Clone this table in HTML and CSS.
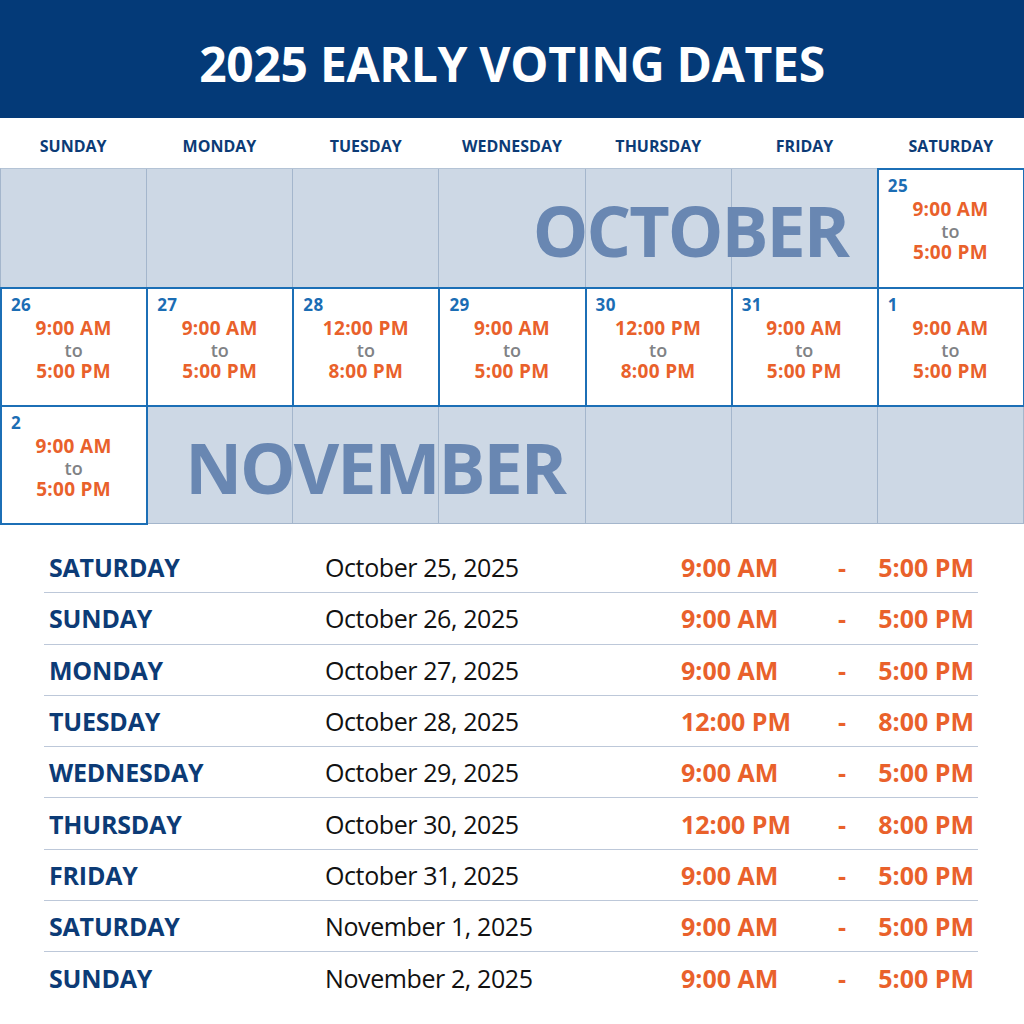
FILE: index.html
```html
<!DOCTYPE html>
<html lang="en">
<head>
<meta charset="utf-8">
<title>2025 Early Voting Dates</title>
<link rel="stylesheet" href="styles.css">
</head>
<body>
<div class="page">
  <header class="banner"><h1>2025 EARLY VOTING DATES</h1></header>

  <div class="weekdays">
    <div>SUNDAY</div><div>MONDAY</div><div>TUESDAY</div><div>WEDNESDAY</div><div>THURSDAY</div><div>FRIDAY</div><div>SATURDAY</div>
  </div>

  <div class="cal">
    <div class="cell"></div><div class="cell"></div><div class="cell"></div><div class="cell"></div><div class="cell"></div><div class="cell"></div>
    <div class="cell day"><span class="num">25</span><div class="hours"><b>9:00 AM</b><i>to</i><b>5:00 PM</b></div></div>

    <div class="cell day"><span class="num">26</span><div class="hours"><b>9:00 AM</b><i>to</i><b>5:00 PM</b></div></div>
    <div class="cell day"><span class="num">27</span><div class="hours"><b>9:00 AM</b><i>to</i><b>5:00 PM</b></div></div>
    <div class="cell day"><span class="num">28</span><div class="hours"><b>12:00 PM</b><i>to</i><b>8:00 PM</b></div></div>
    <div class="cell day"><span class="num">29</span><div class="hours"><b>9:00 AM</b><i>to</i><b>5:00 PM</b></div></div>
    <div class="cell day"><span class="num">30</span><div class="hours"><b>12:00 PM</b><i>to</i><b>8:00 PM</b></div></div>
    <div class="cell day"><span class="num">31</span><div class="hours"><b>9:00 AM</b><i>to</i><b>5:00 PM</b></div></div>
    <div class="cell day"><span class="num">1</span><div class="hours"><b>9:00 AM</b><i>to</i><b>5:00 PM</b></div></div>

    <div class="cell day"><span class="num">2</span><div class="hours"><b>9:00 AM</b><i>to</i><b>5:00 PM</b></div></div>
    <div class="cell"></div><div class="cell"></div><div class="cell"></div><div class="cell"></div><div class="cell"></div><div class="cell"></div>

    <div class="month oct"><span>OCTOBER</span></div>
    <div class="month nov"><span>NOVEMBER</span></div>
  </div>

  <div class="list">
    <div class="row"><span class="wd">SATURDAY</span><span class="dt">October 25, 2025</span><span class="t">9:00 AM</span><span class="dash">-</span><span class="t end">5:00 PM</span></div>
    <div class="row"><span class="wd">SUNDAY</span><span class="dt">October 26, 2025</span><span class="t">9:00 AM</span><span class="dash">-</span><span class="t end">5:00 PM</span></div>
    <div class="row"><span class="wd">MONDAY</span><span class="dt">October 27, 2025</span><span class="t">9:00 AM</span><span class="dash">-</span><span class="t end">5:00 PM</span></div>
    <div class="row"><span class="wd">TUESDAY</span><span class="dt">October 28, 2025</span><span class="t">12:00 PM</span><span class="dash">-</span><span class="t end">8:00 PM</span></div>
    <div class="row"><span class="wd">WEDNESDAY</span><span class="dt">October 29, 2025</span><span class="t">9:00 AM</span><span class="dash">-</span><span class="t end">5:00 PM</span></div>
    <div class="row"><span class="wd">THURSDAY</span><span class="dt">October 30, 2025</span><span class="t">12:00 PM</span><span class="dash">-</span><span class="t end">8:00 PM</span></div>
    <div class="row"><span class="wd">FRIDAY</span><span class="dt">October 31, 2025</span><span class="t">9:00 AM</span><span class="dash">-</span><span class="t end">5:00 PM</span></div>
    <div class="row"><span class="wd">SATURDAY</span><span class="dt">November 1, 2025</span><span class="t">9:00 AM</span><span class="dash">-</span><span class="t end">5:00 PM</span></div>
    <div class="row"><span class="wd">SUNDAY</span><span class="dt">November 2, 2025</span><span class="t">9:00 AM</span><span class="dash">-</span><span class="t end">5:00 PM</span></div>
  </div>
</div>
</body>
</html>
```

FILE: styles.css
```css
* { box-sizing: border-box; margin: 0; padding: 0; }
html, body { background: #ffffff; }
body { font-family: "Open Sans", "Noto Sans", sans-serif; width: 1024px; height: 1024px; overflow: hidden; }

.banner {
  height: 118px;
  background: #043a78;
  display: flex;
  align-items: center;
  justify-content: center;
}
.banner h1 {
  color: #ffffff;
  font-size: 48px;
  font-weight: 700;
  letter-spacing: -0.3px;
  line-height: 1;
  padding-top: 10px;
}

.weekdays {
  height: 50px;
  display: grid;
  grid-template-columns: repeat(7, 1fr);
  align-items: center;
  text-align: center;
  color: #0c3b76;
  font-size: 16px;
  font-weight: 700;
  padding-top: 6px;
}

.cal {
  position: relative;
  display: grid;
  grid-template-columns: repeat(7, 1fr);
  grid-template-rows: 119px 118px 118px;
  border-top: 1px solid #b4c3d5;
  border-left: 1px solid #a4b6cc;
  background: #cdd8e5;
}
.cell {
  border-right: 1px solid #a4b6cc;
  border-bottom: 1px solid #a4b6cc;
}
.cell.day {
  position: relative;
  background: #ffffff;
  border-color: transparent;
  outline: 2px solid #1c6fb6;
  outline-offset: -1px;
  padding: 7px 0 0 10px;
  z-index: 1;
}
.num {
  display: block;
  color: #1b6db4;
  font-size: 17px;
  font-weight: 700;
  letter-spacing: 0.4px;
  line-height: 20px;
}
.hours {
  display: flex;
  flex-direction: column;
  align-items: center;
  margin-left: -10px;
  margin-top: 3px;
  line-height: 21.5px;
}
.hours b { color: #e9612b; font-size: 19px; font-weight: 700; letter-spacing: 0.3px; }
.hours i { color: #808285; font-size: 18px; font-style: normal; font-weight: 600; }

.month {
  position: absolute;
  top: 0;
  bottom: 0;
  display: flex;
  align-items: center;
  color: #6987b2;
  font-size: 70px;
  font-weight: 700;
  letter-spacing: -2px;
  line-height: 1;
}
.month.oct { grid-row: 1 / 2; grid-column: 1 / 7; right: 30px; padding-top: 2px; }
.month.nov { grid-row: 3 / 4; grid-column: 2 / 8; left: 38px; padding-top: 4px; }

.list {
  margin: 18px 46px 0 44px;
}
.row {
  height: 51.3px;
  display: grid;
  grid-template-columns: 276px 356px 157px 20px 1fr;
  align-items: center;
  padding: 0 4px 0 5px;
  border-bottom: 1.5px solid #bdc8d9;
  font-size: 25px;
}
.row:last-child { border-bottom: none; }
.wd { color: #0c3b76; font-weight: 700; letter-spacing: -0.2px; }
.dt { color: #111111; font-weight: 400; letter-spacing: -0.4px; }
.t { color: #e9612b; font-weight: 700; letter-spacing: 0; }
.dash { color: #e9612b; font-weight: 700; }
.end { text-align: right; }
```
